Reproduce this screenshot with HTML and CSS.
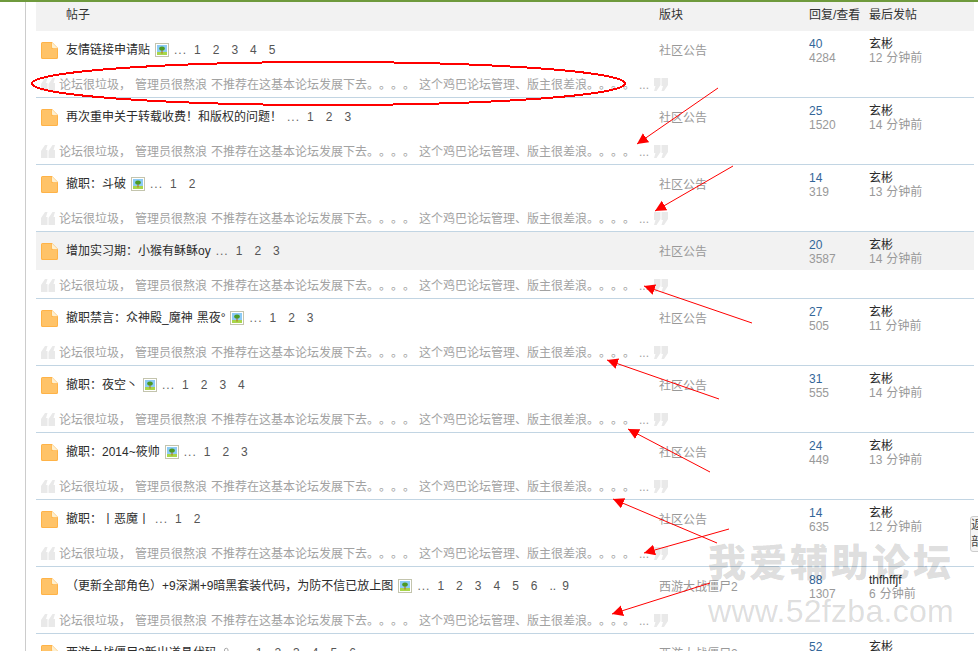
FILE: index.html
```html
<!DOCTYPE html>
<html lang="zh">
<head>
<meta charset="utf-8">
<title>帖子列表</title>
<link rel="stylesheet" href="styles.css">
</head>
<body>
<svg class="defs" width="0" height="0" aria-hidden="true">
  <defs>
    <symbol id="folder" viewBox="0 0 17 17">
      <path d="M1.5 0H11L17 6V15.5A1.5 1.5 0 0 1 15.5 17H1.5A1.5 1.5 0 0 1 0 15.5V1.5A1.5 1.5 0 0 1 1.5 0Z" fill="#ffb347"/>
      <path d="M1 1H10.5V7H16V15A1 1 0 0 1 15 16H2A1 1 0 0 1 1 15Z" fill="#ffc368"/>
      <path d="M11 0.5L16.7 6.2H12.2A1.2 1.2 0 0 1 11 5Z" fill="#fdf0d2"/>
    </symbol>
    <symbol id="thumb" viewBox="0 0 14 14">
      <rect x="0.5" y="0.5" width="13" height="13" fill="#fff" stroke="#c3c4ad"/>
      <rect x="2" y="2" width="10" height="7" fill="#8ccbf5"/>
      <rect x="2" y="9" width="10" height="3" fill="#a8d64a"/>
      <rect x="6.5" y="7" width="1" height="3.5" fill="#b5651d"/>
      <ellipse cx="7" cy="5.5" rx="2.8" ry="2" fill="#4c9a22"/>
    </symbol>
    <symbol id="open" viewBox="0 0 14 13">
      <path d="M4 0H6.5L5 5H6.5V13H0V6Z M11.5 0H14L12.5 5H14V13H7.5V6Z" fill="#e9e9e9"/>
    </symbol>
    <symbol id="close" viewBox="0 0 14 13">
      <path d="M0 0H6.5V7L2.5 13H0L1.5 8H0Z M7.5 0H14V7L10 13H7.5L9 8H7.5Z" fill="#e9e9e9"/>
    </symbol>
  </defs>
</svg>
<div class="page">
  <div class="rail">
    <div class="list">
      <div class="head">
        <span class="c-subject">帖子</span>
        <span>版块</span>
        <span>回复/查看</span>
        <span>最后发帖</span>
      </div>

      <div class="row">
        <div class="main">
          <div class="subject"><svg class="folder"><use href="#folder"/></svg><a class="title">友情链接申请贴</a><svg class="thumb"><use href="#thumb"/></svg><span class="more">...</span><span class="pager"><a>1</a><a>2</a><a>3</a><a>4</a><a>5</a></span></div>
          <div class="forum">社区公告</div>
          <div class="stat"><a class="num">40</a><span>4284</span></div>
          <div class="last"><a>玄彬</a><span>12 分钟前</span></div>
        </div>
        <div class="preview"><svg class="quote"><use href="#open"/></svg><span class="ptext">论坛很垃圾， 管理员很熬浪 不推荐在这基本论坛发展下去。。。。 这个鸡巴论坛管理、版主很差浪。。。。 ...</span><svg class="quote end"><use href="#close"/></svg></div>
      </div>

      <div class="row">
        <div class="main">
          <div class="subject"><svg class="folder"><use href="#folder"/></svg><a class="title">再次重申关于转载收费！和版权的问题！</a><span class="more">...</span><span class="pager"><a>1</a><a>2</a><a>3</a></span></div>
          <div class="forum">社区公告</div>
          <div class="stat"><a class="num">25</a><span>1520</span></div>
          <div class="last"><a>玄彬</a><span>14 分钟前</span></div>
        </div>
        <div class="preview"><svg class="quote"><use href="#open"/></svg><span class="ptext">论坛很垃圾， 管理员很熬浪 不推荐在这基本论坛发展下去。。。。 这个鸡巴论坛管理、版主很差浪。。。。 ...</span><svg class="quote end"><use href="#close"/></svg></div>
      </div>

      <div class="row">
        <div class="main">
          <div class="subject"><svg class="folder"><use href="#folder"/></svg><a class="title">撤职：斗破</a><svg class="thumb"><use href="#thumb"/></svg><span class="more">...</span><span class="pager"><a>1</a><a>2</a></span></div>
          <div class="forum">社区公告</div>
          <div class="stat"><a class="num">14</a><span>319</span></div>
          <div class="last"><a>玄彬</a><span>13 分钟前</span></div>
        </div>
        <div class="preview"><svg class="quote"><use href="#open"/></svg><span class="ptext">论坛很垃圾， 管理员很熬浪 不推荐在这基本论坛发展下去。。。。 这个鸡巴论坛管理、版主很差浪。。。。 ...</span><svg class="quote end"><use href="#close"/></svg></div>
      </div>

      <div class="row hover">
        <div class="main">
          <div class="subject"><svg class="folder"><use href="#folder"/></svg><a class="title">增加实习期：小猴有稣稣oy</a><span class="more">...</span><span class="pager"><a>1</a><a>2</a><a>3</a></span></div>
          <div class="forum">社区公告</div>
          <div class="stat"><a class="num">20</a><span>3587</span></div>
          <div class="last"><a>玄彬</a><span>14 分钟前</span></div>
        </div>
        <div class="preview"><svg class="quote"><use href="#open"/></svg><span class="ptext">论坛很垃圾， 管理员很熬浪 不推荐在这基本论坛发展下去。。。。 这个鸡巴论坛管理、版主很差浪。。。。 ...</span><svg class="quote end"><use href="#close"/></svg></div>
      </div>

      <div class="row">
        <div class="main">
          <div class="subject"><svg class="folder"><use href="#folder"/></svg><a class="title">撤职禁言：众神殿_魔神 黑夜°</a><svg class="thumb"><use href="#thumb"/></svg><span class="more">...</span><span class="pager"><a>1</a><a>2</a><a>3</a></span></div>
          <div class="forum">社区公告</div>
          <div class="stat"><a class="num">27</a><span>505</span></div>
          <div class="last"><a>玄彬</a><span>11 分钟前</span></div>
        </div>
        <div class="preview"><svg class="quote"><use href="#open"/></svg><span class="ptext">论坛很垃圾， 管理员很熬浪 不推荐在这基本论坛发展下去。。。。 这个鸡巴论坛管理、版主很差浪。。。。 ...</span><svg class="quote end"><use href="#close"/></svg></div>
      </div>

      <div class="row">
        <div class="main">
          <div class="subject"><svg class="folder"><use href="#folder"/></svg><a class="title">撤职：夜空丶</a><svg class="thumb"><use href="#thumb"/></svg><span class="more">...</span><span class="pager"><a>1</a><a>2</a><a>3</a><a>4</a></span></div>
          <div class="forum">社区公告</div>
          <div class="stat"><a class="num">31</a><span>555</span></div>
          <div class="last"><a>玄彬</a><span>14 分钟前</span></div>
        </div>
        <div class="preview"><svg class="quote"><use href="#open"/></svg><span class="ptext">论坛很垃圾， 管理员很熬浪 不推荐在这基本论坛发展下去。。。。 这个鸡巴论坛管理、版主很差浪。。。。 ...</span><svg class="quote end"><use href="#close"/></svg></div>
      </div>

      <div class="row">
        <div class="main">
          <div class="subject"><svg class="folder"><use href="#folder"/></svg><a class="title">撤职：2014~筱帅</a><svg class="thumb"><use href="#thumb"/></svg><span class="more">...</span><span class="pager"><a>1</a><a>2</a><a>3</a></span></div>
          <div class="forum">社区公告</div>
          <div class="stat"><a class="num">24</a><span>449</span></div>
          <div class="last"><a>玄彬</a><span>13 分钟前</span></div>
        </div>
        <div class="preview"><svg class="quote"><use href="#open"/></svg><span class="ptext">论坛很垃圾， 管理员很熬浪 不推荐在这基本论坛发展下去。。。。 这个鸡巴论坛管理、版主很差浪。。。。 ...</span><svg class="quote end"><use href="#close"/></svg></div>
      </div>

      <div class="row">
        <div class="main">
          <div class="subject"><svg class="folder"><use href="#folder"/></svg><a class="title">撤职：丨恶魔丨</a><span class="more">...</span><span class="pager"><a>1</a><a>2</a></span></div>
          <div class="forum">社区公告</div>
          <div class="stat"><a class="num">14</a><span>635</span></div>
          <div class="last"><a>玄彬</a><span>12 分钟前</span></div>
        </div>
        <div class="preview"><svg class="quote"><use href="#open"/></svg><span class="ptext">论坛很垃圾， 管理员很熬浪 不推荐在这基本论坛发展下去。。。。 这个鸡巴论坛管理、版主很差浪。。。。 ...</span><svg class="quote end"><use href="#close"/></svg></div>
      </div>

      <div class="row">
        <div class="main">
          <div class="subject"><svg class="folder"><use href="#folder"/></svg><a class="title">（更新全部角色）+9深渊+9暗黑套装代码，为防不信已放上图</a><svg class="thumb"><use href="#thumb"/></svg><span class="more">...</span><span class="pager"><a>1</a><a>2</a><a>3</a><a>4</a><a>5</a><a>6</a><a class="gap">..</a><a>9</a></span></div>
          <div class="forum">西游大战僵尸2</div>
          <div class="stat"><a class="num">88</a><span>1307</span></div>
          <div class="last"><a>thfhffjf</a><span>6 分钟前</span></div>
        </div>
        <div class="preview"><svg class="quote"><use href="#open"/></svg><span class="ptext">论坛很垃圾， 管理员很熬浪 不推荐在这基本论坛发展下去。。。。 这个鸡巴论坛管理、版主很差浪。。。。 ...</span><svg class="quote end"><use href="#close"/></svg></div>
      </div>

      <div class="row">
        <div class="main">
          <div class="subject"><svg class="folder"><use href="#folder"/></svg><a class="title">西游大战僵尸2新出道具代码</a><svg class="clip" viewBox="0 0 8 12"><path d="M6.5 4V9A2.5 2.5 0 0 1 1.5 9V3A1.7 1.7 0 0 1 5 3V8.5" fill="none" stroke="#aaa"/></svg><span class="more">...</span><span class="pager"><a>1</a><a>2</a><a>3</a><a>4</a><a>5</a><a>6</a></span></div>
          <div class="forum">西游大战僵尸2</div>
          <div class="stat"><a class="num">52</a><span>1120</span></div>
          <div class="last"><a>玄彬</a><span>14 分钟前</span></div>
        </div>
      </div>
    </div>
  </div>

  <div class="side-tab">返回顶部</div>

  <div class="mark">
    <div class="mark-cn">我爱辅助论坛</div>
    <div class="mark-en">www.52fzba.com</div>
  </div>

  <svg class="notes" width="978" height="651" viewBox="0 0 978 651" aria-hidden="true">
    <defs>
      <marker id="tip" markerUnits="userSpaceOnUse" markerWidth="12" markerHeight="12" refX="11" refY="5.5" orient="auto">
        <path d="M0 0L11 5.5L0 11Z" fill="#ff0000"/>
      </marker>
    </defs>
    <ellipse class="ring" cx="328.5" cy="83.5" rx="296.5" ry="21.5"/>
    <g class="arrows">
      <line x1="718" y1="88" x2="637" y2="144" marker-end="url(#tip)"/>
      <line x1="733" y1="166" x2="655" y2="211" marker-end="url(#tip)"/>
      <line x1="752" y1="323" x2="644" y2="286" marker-end="url(#tip)"/>
      <line x1="719" y1="399" x2="607" y2="360" marker-end="url(#tip)"/>
      <line x1="710" y1="472" x2="628" y2="429" marker-end="url(#tip)"/>
      <line x1="717" y1="543" x2="613" y2="499" marker-end="url(#tip)"/>
      <line x1="729" y1="529" x2="644" y2="553" marker-end="url(#tip)"/>
      <line x1="710" y1="583" x2="612" y2="614" marker-end="url(#tip)"/>
    </g>
  </svg>
</div>
</body>
</html>
```

FILE: styles.css
```css
html, body {
  margin: 0;
  padding: 0;
  height: 651px;
  overflow: hidden;
  background: #fff;
}

body {
  font: 12px/14px "Liberation Sans", "Noto Sans CJK SC", sans-serif;
  word-spacing: 0.67px;
  text-spacing-trim: space-all;
  color: #333;
}

.defs {
  display: block;
  height: 0;
}

.page {
  position: relative;
  width: 978px;
  height: 651px;
  overflow: hidden;
  border-top: 2px solid #6f9a3d;
  box-sizing: border-box;
}

.rail {
  margin-left: 25px;
  padding-left: 10px;
  border-left: 1px solid #ccc;
  height: 100%;
}

.list {
  width: 938px;
}

.head,
.main {
  display: grid;
  grid-template-columns: 623px 150px 60px 105px;
}

.head {
  height: 29px;
  line-height: 26px;
  background: #f2f2f2;
}

.c-subject {
  padding-left: 30px;
}

.row {
  height: 66px;
  border-bottom: 1px solid #c2d5e3;
}

.main {
  height: 38px;
}

.hover .main {
  background: #f2f2f2;
}

.subject {
  display: flex;
  align-items: center;
  padding-left: 5px;
  white-space: nowrap;
}

.folder {
  width: 17px;
  height: 17px;
  margin-right: 8px;
  flex: none;
}

.title {
  color: #2b2b2b;
}

.thumb {
  width: 14px;
  height: 14px;
  margin-left: 5px;
  flex: none;
}

.clip {
  width: 8px;
  height: 12px;
  margin-left: 6px;
  flex: none;
}

.more {
  margin-left: 5px;
  width: 12px;
  color: #666;
  letter-spacing: 1px;
}

.pager {
  display: flex;
  gap: 12px;
  margin-left: 8px;
  color: #555;
}

.gap {
  margin-right: -6px;
}

.forum {
  display: flex;
  align-items: center;
  color: #999;
  padding-top: 1px;
}

.stat,
.last {
  display: flex;
  flex-direction: column;
  padding-top: 6px;
  color: #999;
  white-space: nowrap;
}

.num {
  color: #369;
}

.last a {
  color: #2b2b2b;
}

.preview {
  display: flex;
  align-items: center;
  box-sizing: border-box;
  height: 28px;
  padding: 3px 0 0 5px;
  white-space: nowrap;
}

.quote {
  width: 14px;
  height: 13px;
  flex: none;
}

.ptext {
  margin-left: 4px;
  color: #a2a2a2;
}

.end {
  margin-left: 5px;
}

.side-tab {
  position: absolute;
  left: 970px;
  top: 514px;
  width: 40px;
  height: 36px;
  box-sizing: border-box;
  border: 1px solid #ccc;
  border-radius: 3px;
  background: #f5f5f5;
  line-height: 17px;
  color: #444;
}

.mark {
  position: absolute;
  left: 708px;
  top: 534px;
  color: rgba(0, 0, 0, 0.14);
  white-space: nowrap;
  word-spacing: 0;
}

.mark-cn {
  font: 900 38px/48px "Noto Sans CJK SC", sans-serif;
  letter-spacing: 3px;
  margin-bottom: 9px;
}

.mark-en {
  font: 32px/36px "Liberation Sans", sans-serif;
  letter-spacing: 0.3px;
}

.notes {
  position: absolute;
  left: 0;
  top: -2px;
  pointer-events: none;
}

.ring {
  fill: none;
  stroke: #f00;
  stroke-width: 2;
  shape-rendering: crispEdges;
}

.arrows line {
  stroke: #f00;
  stroke-width: 1;
}
```
